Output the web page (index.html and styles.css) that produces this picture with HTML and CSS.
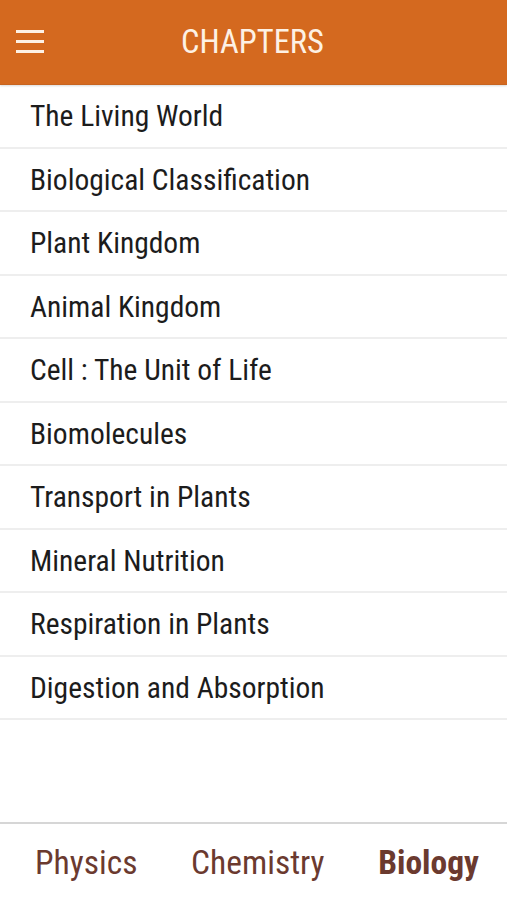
FILE: index.html
```html
<!DOCTYPE html>
<html lang="en">
<head>
<meta charset="UTF-8">
<meta name="viewport" content="width=device-width, initial-scale=1.0">
<title>Chapters</title>
<link rel="stylesheet" href="styles.css">
</head>
<body>
<div class="app">
  <header class="topbar">
    <div class="menu-btn">
      <span></span>
      <span></span>
      <span></span>
    </div>
    <h1>CHAPTERS</h1>
  </header>

  <ul class="chapters">
    <li>The Living World</li>
    <li>Biological Classification</li>
    <li>Plant Kingdom</li>
    <li>Animal Kingdom</li>
    <li>Cell : The Unit of Life</li>
    <li>Biomolecules</li>
    <li>Transport in Plants</li>
    <li>Mineral Nutrition</li>
    <li>Respiration in Plants</li>
    <li>Digestion and Absorption</li>
  </ul>

  <nav class="tabs">
    <a href="#" class="tab">Physics</a>
    <a href="#" class="tab">Chemistry</a>
    <a href="#" class="tab active">Biology</a>
  </nav>
</div>
</body>
</html>
```

FILE: styles.css
```css
body {margin: 0; padding: 0; background-color: #fff; font-family: Roboto, "DejaVu Sans Condensed", sans-serif; font-stretch: condensed;}

.app {
  display: flex;
  flex-direction: column;
  height: 900px;
}

.topbar {
  position: relative;
  height: 84px;
  background-color: #d4691f;
  border-bottom: 1px solid #c7641f;
  display: flex;
  align-items: center;
  justify-content: center;
  box-shadow: 0 1px 2px rgba(0, 0, 0, 0.15);
}
.topbar h1 {
  margin: 0 0 0 -2px;
  color: #fdf1e4;
  font-weight: normal;
  font-size: 32.5px;
}
.menu-btn {
  position: absolute;
  left: 16px;
  top: 30px;
  width: 28px;
  display: flex;
  flex-direction: column;
  gap: 7px;
}
.menu-btn span {
  display: block;
  height: 3px;
  background-color: #fdf1e4;
}

.chapters {
  list-style: none;
  margin: 0;
  padding: 0;
  flex: 1;
}
.chapters li {
  height: 61.5px;
  line-height: 63px;
  padding-left: 30px;
  font-size: 29.5px;
  color: #1c1c1c;
  border-bottom: 2px solid #eeeeee;
}

.tabs {
  height: 76px;
  border-top: 2px solid #d6d6d6;
  display: flex;
  justify-content: space-between;
  align-items: center;
  padding: 0 28px 0 35px;
}
.tab {
  color: #6b3a2f;
  text-decoration: none;
  font-size: 33.5px;
}
.tab.active {font-weight: bold;}
```
